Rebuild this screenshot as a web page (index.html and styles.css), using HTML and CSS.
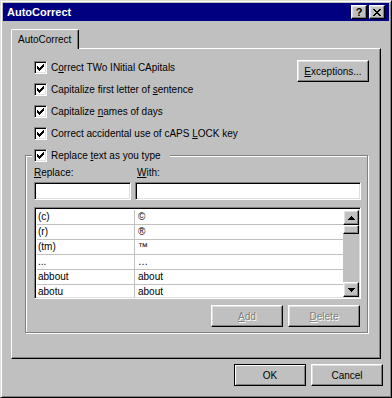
FILE: index.html
```html
<!DOCTYPE html>
<html lang="en">
<head>
  <meta charset="UTF-8">
  <title>AutoCorrect</title>
  <link rel="stylesheet" href="styles.css">
</head>
<body>
  <div class="dialog">
    <div class="titlebar">
      <span class="title">AutoCorrect</span>
      <div class="title-buttons">
        <span class="tbtn raised">?</span>
        <span class="tbtn raised">
          <svg width="8" height="7" viewBox="0 0 8 7" shape-rendering="crispEdges"><path d="M0 0h2v1H0z M6 0h2v1H6z M1 1h2v1H1z M5 1h2v1H5z M2 2h4v1H2z M3 3h2v1H3z M2 4h4v1H2z M1 5h2v1H1z M5 5h2v1H5z M0 6h2v1H0z M6 6h2v1H6z" fill="#000"/></svg>
        </span>
      </div>
    </div>

    <div class="tabs">
      <div class="tab">AutoCorrect</div>
    </div>

    <div class="panel">
      <div class="top">
        <div class="options">
          <div class="check-row"><span class="check"><svg width="9" height="9" viewBox="0 0 9 9" shape-rendering="crispEdges"><path d="M1 3h1v3H1z M2 4h1v3H2z M3 5h1v3H3z M4 4h1v3H4z M5 3h1v3H5z M6 2h1v3H6z M7 1h1v3H7z" fill="#000"/></svg></span><span>C<u>o</u>rrect TWo INitial CApitals</span></div>
          <div class="check-row"><span class="check"><svg width="9" height="9" viewBox="0 0 9 9" shape-rendering="crispEdges"><path d="M1 3h1v3H1z M2 4h1v3H2z M3 5h1v3H3z M4 4h1v3H4z M5 3h1v3H5z M6 2h1v3H6z M7 1h1v3H7z" fill="#000"/></svg></span><span>Capitalize first letter of <u>s</u>entence</span></div>
          <div class="check-row"><span class="check"><svg width="9" height="9" viewBox="0 0 9 9" shape-rendering="crispEdges"><path d="M1 3h1v3H1z M2 4h1v3H2z M3 5h1v3H3z M4 4h1v3H4z M5 3h1v3H5z M6 2h1v3H6z M7 1h1v3H7z" fill="#000"/></svg></span><span>Capitalize <u>n</u>ames of days</span></div>
          <div class="check-row"><span class="check"><svg width="9" height="9" viewBox="0 0 9 9" shape-rendering="crispEdges"><path d="M1 3h1v3H1z M2 4h1v3H2z M3 5h1v3H3z M4 4h1v3H4z M5 3h1v3H5z M6 2h1v3H6z M7 1h1v3H7z" fill="#000"/></svg></span><span>Correct accidental use of cAPS <u>L</u>OCK key</span></div>
        </div>
        <button class="btn raised exceptions"><u>E</u>xceptions...</button>
      </div>

      <div class="group">
        <div class="legend check-row"><span class="check"><svg width="9" height="9" viewBox="0 0 9 9" shape-rendering="crispEdges"><path d="M1 3h1v3H1z M2 4h1v3H2z M3 5h1v3H3z M4 4h1v3H4z M5 3h1v3H5z M6 2h1v3H6z M7 1h1v3H7z" fill="#000"/></svg></span><span>Replace <u>t</u>ext as you type</span></div>

        <div class="fields">
          <div class="field-label"><u>R</u>eplace:</div>
          <div class="field-label with"><u>W</u>ith:</div>
          <div class="input sunken"></div>
          <div class="input sunken"></div>
        </div>

        <div class="list sunken">
          <div class="rows">
            <div class="row"><span class="col-a">(c)</span><span class="col-b">©</span></div>
            <div class="row"><span class="col-a">(r)</span><span class="col-b">®</span></div>
            <div class="row"><span class="col-a">(tm)</span><span class="col-b">™</span></div>
            <div class="row"><span class="col-a">...</span><span class="col-b">…</span></div>
            <div class="row"><span class="col-a">abbout</span><span class="col-b">about</span></div>
            <div class="row"><span class="col-a">abotu</span><span class="col-b">about</span></div>
          </div>
          <div class="scrollbar">
            <span class="sbtn raised"><svg width="7" height="4" viewBox="0 0 7 4" shape-rendering="crispEdges"><path d="M3 0h1v1H3z M2 1h3v1H2z M1 2h5v1H1z M0 3h7v1H0z" fill="#000"/></svg></span>
            <span class="thumb raised"></span>
            <span class="track"></span>
            <span class="sbtn raised"><svg width="7" height="4" viewBox="0 0 7 4" shape-rendering="crispEdges"><path d="M0 0h7v1H0z M1 1h5v1H1z M2 2h3v1H2z M3 3h1v1H3z" fill="#000"/></svg></span>
          </div>
        </div>

        <div class="group-buttons">
          <button class="btn raised disabled"><u>A</u>dd</button>
          <button class="btn raised disabled"><u>D</u>elete</button>
        </div>
      </div>
    </div>

    <div class="footer">
      <button class="btn raised default">OK</button>
      <button class="btn raised">Cancel</button>
    </div>
  </div>
</body>
</html>
```

FILE: styles.css
```css
* {
  box-sizing: border-box;
}
body {
  margin: 0;
  background-color: #c0c0c0;
  font-family: "Liberation Sans", Arial, sans-serif;
  font-size: 10px;
  color: #000;
}
.dialog {
  width: 392px;
  height: 398px;
  padding: 2px;
  background-color: #c0c0c0;
  border: 1px solid;
  border-color: #dfdfdf #000 #000 #dfdfdf;
  box-shadow: inset 1px 1px #fff, inset -1px -1px #808080;
  display: flex;
  flex-direction: column;
}
.raised {
  background-color: #c0c0c0;
  border: 1px solid;
  border-color: #fff #000 #000 #fff;
  box-shadow: inset -1px -1px #808080, inset 1px 1px #dfdfdf;
}
.sunken {
  background-color: #fff;
  border: 1px solid;
  border-color: #808080 #fff #fff #808080;
  box-shadow: inset 1px 1px #000, inset -1px -1px #dfdfdf;
}

/* title bar */
.titlebar {
  height: 18px;
  background-color: #000080;
  display: flex;
  align-items: center;
  justify-content: space-between;
  padding: 0 4px 0 4px;
}
.title {
  color: #fff;
  font-weight: bold;
  font-size: 11px;
}
.title-buttons {
  display: flex;
  gap: 2px;
}
.tbtn {
  width: 16px;
  height: 14px;
  display: flex;
  align-items: center;
  justify-content: center;
  font-weight: bold;
  font-size: 11px;
  line-height: 12px;
}

/* tab */
.tabs {
  display: flex;
  margin: 8px 8px 0 8px;
}
.tab {
  position: relative;
  z-index: 1;
  width: 68px;
  height: 20px;
  margin-bottom: -1px;
  padding: 0 0 0 6px;
  display: flex;
  align-items: center;
  background-color: #c0c0c0;
  border: 1px solid;
  border-bottom: none;
  border-color: #fff #000 #000 #fff;
  border-radius: 2px 2px 0 0;
  box-shadow: inset -1px 0 #808080;
}
.panel {
  height: 311px;
  margin: 0 8px;
  padding: 7px 12px 0 13px;
  border: 1px solid;
  border-color: #fff #000 #000 #fff;
  box-shadow: inset -1px -1px #808080;
}

/* check boxes */
.top {
  display: flex;
  justify-content: space-between;
  align-items: flex-start;
}
.options {
  margin-left: 9px;
}
.check-row {
  height: 22px;
  display: flex;
  align-items: center;
  white-space: nowrap;
}
.check {
  width: 13px;
  height: 13px;
  margin-right: 4px;
  padding: 1px;
  flex: none;
  background-color: #fff;
  border: 1px solid;
  border-color: #808080 #fff #fff #808080;
  box-shadow: inset 1px 1px #000, inset -1px -1px #dfdfdf;
}
.check svg {
  display: block;
}

/* buttons */
.btn {
  font-family: inherit;
  font-size: 10px;
  color: #000;
  padding: 0;
  height: 22px;
  width: 72px;
  cursor: default;
}
.exceptions {
  width: 72px;
  margin-top: 4px;
  margin-right: -1px;
}
.btn.disabled {
  color: #808080;
  text-shadow: 1px 1px #fff;
}
.btn.default {
  border-color: #000;
  box-shadow: inset 1px 1px #fff, inset -1px -1px #808080;
}

/* replace group */
.group {
  margin-top: 11px;
  width: 343px;
  padding: 0 6px 5px 8px;
  border: 1px solid #808080;
  box-shadow: inset 1px 1px #fff, 1px 1px #fff;
}
.legend {
  width: max-content;
  margin: -12px 0 0 -2px;
  padding: 0 9px 0 2px;
  background-color: #c0c0c0;
}
.fields {
  margin-top: 1px;
  display: grid;
  grid-template-columns: 97px 1fr;
  column-gap: 4px;
  row-gap: 3px;
}
.field-label {
  height: 12px;
  line-height: 12px;
}
.field-label.with {
  padding-left: 2px;
}
.input {
  height: 18px;
}

/* list */
.list {
  margin-top: 7px;
  height: 92px;
  padding: 1px;
  display: flex;
}
.rows {
  flex: 1;
  overflow: hidden;
  margin: 1px 0 0 1px;
}
.row {
  display: flex;
  height: 15px;
  line-height: 14px;
  border-bottom: 1px solid #c0c0c0;
}
.col-a {
  width: 98px;
  padding-left: 1px;
  border-right: 1px solid #c0c0c0;
}
.col-b {
  padding-left: 3px;
}
.scrollbar {
  width: 16px;
  margin-top: 1px;
  display: flex;
  flex-direction: column;
  background-color: #c0c0c0;
}
.sbtn {
  height: 15px;
  display: flex;
  align-items: center;
  justify-content: center;
}
.thumb {
  height: 9px;
}
.track {
  flex: 1;
}
.group-buttons {
  margin-top: 6px;
  display: flex;
  justify-content: flex-end;
  gap: 5px;
  padding-right: 1px;
}

/* footer */
.footer {
  margin-top: 5px;
  padding-right: 6px;
  display: flex;
  justify-content: flex-end;
  gap: 5px;
}
```
